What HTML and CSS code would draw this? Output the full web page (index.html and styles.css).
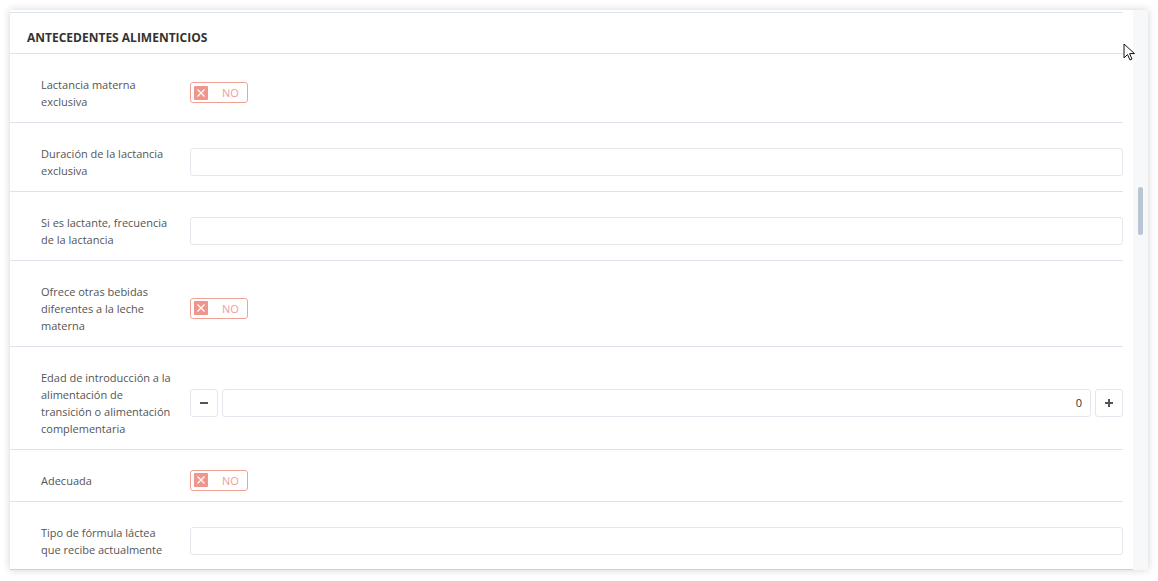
FILE: index.html
```html
<!DOCTYPE html>
<html lang="es">
<head>
    <meta charset="UTF-8">
    <title>Antecedentes alimenticios</title>
    <link rel="stylesheet" href="styles.css">
</head>
<body>

    <div class="frame">
        <div class="content">
            <div class="section">
                <div class="section-title">ANTECEDENTES ALIMENTICIOS</div>

                <div class="row">
                    <div class="row-label">Lactancia materna exclusiva</div>
                    <div class="row-field">
                        <span class="switch">
                            <span class="switch-box"><svg viewBox="0 0 14 14" width="14" height="14"><path d="M3.5 3.5 L10.5 10.5 M10.5 3.5 L3.5 10.5" stroke="#fff" stroke-width="1.2" fill="none"/></svg></span>
                            <span class="switch-text">NO</span>
                        </span>
                    </div>
                </div>

                <div class="row">
                    <div class="row-label">Duración de la lactancia exclusiva</div>
                    <div class="row-field"><input type="text" class="text-input"></div>
                </div>

                <div class="row">
                    <div class="row-label">Si es lactante, frecuencia de la lactancia</div>
                    <div class="row-field"><input type="text" class="text-input"></div>
                </div>

                <div class="row">
                    <div class="row-label">Ofrece otras bebidas diferentes a la leche materna</div>
                    <div class="row-field">
                        <span class="switch">
                            <span class="switch-box"><svg viewBox="0 0 14 14" width="14" height="14"><path d="M3.5 3.5 L10.5 10.5 M10.5 3.5 L3.5 10.5" stroke="#fff" stroke-width="1.2" fill="none"/></svg></span>
                            <span class="switch-text">NO</span>
                        </span>
                    </div>
                </div>

                <div class="row">
                    <div class="row-label">Edad de introducción a la alimentación de transición o alimentación complementaria</div>
                    <div class="row-field">
                        <div class="spinner">
                            <button class="spin-btn"><svg viewBox="0 0 10 10" width="10" height="10"><path d="M1 5 H9" stroke="#555" stroke-width="2"/></svg></button>
                            <input type="text" class="text-input spin-input" value="0">
                            <button class="spin-btn"><svg viewBox="0 0 10 10" width="10" height="10"><path d="M1 5 H9 M5 1 V9" stroke="#555" stroke-width="2"/></svg></button>
                        </div>
                    </div>
                </div>

                <div class="row">
                    <div class="row-label">Adecuada</div>
                    <div class="row-field">
                        <span class="switch">
                            <span class="switch-box"><svg viewBox="0 0 14 14" width="14" height="14"><path d="M3.5 3.5 L10.5 10.5 M10.5 3.5 L3.5 10.5" stroke="#fff" stroke-width="1.2" fill="none"/></svg></span>
                            <span class="switch-text">NO</span>
                        </span>
                    </div>
                </div>

                <div class="row">
                    <div class="row-label">Tipo de fórmula láctea que recibe actualmente</div>
                    <div class="row-field"><input type="text" class="text-input"></div>
                </div>
            </div>
        </div>
        <div class="scrollbar">
            <div class="scrollbar-thumb"></div>
        </div>
    </div>

    <svg class="cursor" viewBox="0 0 14 20" width="14" height="20"><path d="M1 1 V15 L4.5 11.5 L7 17 L9 16 L6.6 10.6 L11.5 10.6 Z" fill="#fff" stroke="#111" stroke-width="1"/></svg>

</body>
</html>
```

FILE: styles.css
```css
body {
    font-family: "Open Sans", Arial, sans-serif;
    background-color: #fff;
    color: #555;
    margin: 0;
    padding: 10px;
    position: relative;
}

.frame {
    display: flex;
    width: 1138px;
    height: 560px;
    background-color: #fff;
    box-shadow: 0 0 8px rgba(0, 0, 0, 0.18);
    overflow: hidden;
}

.content {
    flex: 1;
    padding: 2px 10px 0 0;
    border-bottom: 1px solid #c9d3e0;
    overflow: hidden;
}

.section {
    border-top: 1px solid #dde3ec;
}

.section-title {
    font-size: 12px;
    font-weight: bold;
    color: #333;
    padding: 16px 17px 7px;
    line-height: 17px;
    border-bottom: 1px solid #dde3ec;
}

.row {
    display: flex;
    align-items: center;
    border-bottom: 1px solid #dde3ec;
}

.row:first-of-type .row-label {
    padding-top: 23px;
}

.row-label {
    width: 134px;
    padding: 22px 0 12px 31px;
    margin-right: 15px;
    font-size: 11px;
    line-height: 17px;
    flex-shrink: 0;
}

.row-field {
    flex: 1;
    display: flex;
    align-items: center;
    padding-top: 9px;
}

.text-input {
    box-sizing: border-box;
    width: 100%;
    height: 28px;
    border: 1px solid #e3e7ee;
    border-radius: 3px;
    font-family: inherit;
    font-size: 11px;
    color: #333;
    padding: 0 8px;
    outline: none;
}

.switch {
    display: inline-flex;
    align-items: center;
    box-sizing: border-box;
    width: 58px;
    height: 21px;
    border: 1px solid #f0a297;
    border-radius: 3px;
    padding-left: 3px;
}

.switch-box {
    display: inline-flex;
    width: 14px;
    height: 14px;
    background-color: #f0958b;
    border-radius: 1px;
}

.switch-text {
    font-size: 11px;
    color: #f29c9c;
    margin-left: 14px;
}

.spinner {
    display: flex;
    gap: 4px;
    width: 100%;
}

.spin-btn {
    box-sizing: border-box;
    width: 28px;
    height: 28px;
    flex-shrink: 0;
    background-color: #fff;
    border: 1px solid #e3e7ee;
    border-radius: 3px;
    padding: 0;
    display: flex;
    align-items: center;
    justify-content: center;
}

.spin-input {
    flex: 1;
    text-align: right;
}

.scrollbar {
    width: 15px;
    background-color: #f6f8fa;
    position: relative;
}

.scrollbar-thumb {
    position: absolute;
    left: 5px;
    top: 177px;
    width: 5px;
    height: 48px;
    border-radius: 3px;
    background-color: #b9c5d3;
}

.cursor {
    position: absolute;
    left: 1123px;
    top: 43px;
}
```
